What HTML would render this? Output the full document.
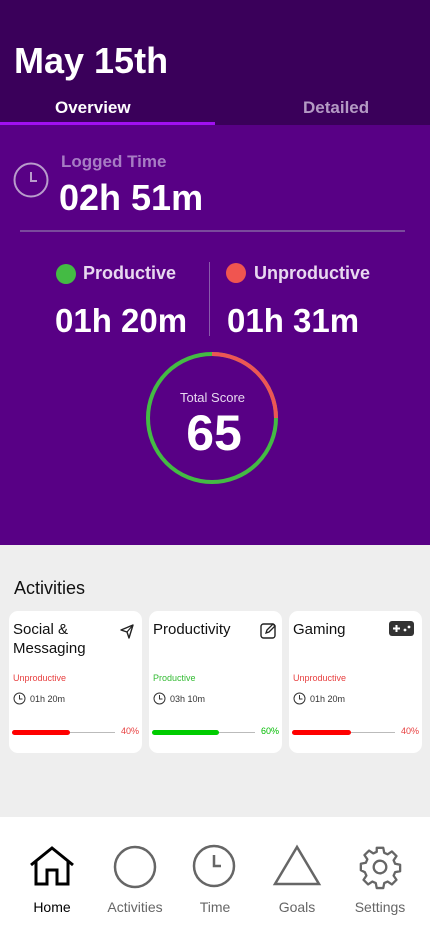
<!DOCTYPE html>
<html><head><style>
*{margin:0;padding:0;box-sizing:border-box}
body{width:430px;height:932px;overflow:hidden;font-family:"Liberation Sans",sans-serif;background:#eee;position:relative}
.a{position:absolute}
.card{position:absolute;top:611px;width:133px;height:142px;background:#fff;border-radius:9px}
.card .t{position:absolute;left:4px;top:9px;font-size:15px;line-height:19px;color:#111}
.card .s{position:absolute;left:4px;top:62px;font-size:9px}
.card .tm{position:absolute;left:4px;top:81px;font-size:9px;color:#333;display:flex;align-items:center;gap:4px}
.card .bar{position:absolute;left:3px;top:121px;width:103px;height:1px;background:#bbb}
.card .fill{position:absolute;left:0;top:-2px;height:5px;border-radius:3px}
.card .p{position:absolute;right:3px;top:115px;font-size:9px}
.nav{position:absolute;top:817px;left:0;width:430px;height:115px;background:#fff}
.nav .l{position:absolute;top:82px;font-size:14px;color:#666;transform:translateX(-50%)}
</style></head><body>
<div class="a" style="left:0;top:0;width:430px;height:125px;background:#3a005a"></div>
<div class="a" style="left:14px;top:40px;font-size:36px;font-weight:bold;color:#fff">May 15th</div>
<div class="a" style="left:55px;top:98px;font-size:17px;font-weight:bold;color:#fff">Overview</div>
<div class="a" style="left:303px;top:98px;font-size:17px;font-weight:bold;color:#b49ac4">Detailed</div>
<div class="a" style="left:0;top:122px;width:215px;height:4px;background:#a010f0"></div>
<div class="a" style="left:0;top:125px;width:430px;height:420px;background:#580085"></div>
<svg class="a" style="left:12px;top:161px" width="38" height="38"><circle cx="19" cy="19" r="16.5" fill="none" stroke="#b99ccc" stroke-width="2"/><path d="M19 11v9h6" fill="none" stroke="#b99ccc" stroke-width="2"/></svg>
<div class="a" style="left:61px;top:152px;font-size:17px;font-weight:bold;color:#a77cc4">Logged Time</div>
<div class="a" style="left:59px;top:177px;font-size:36px;font-weight:bold;color:#fff">02h 51m</div>
<div class="a" style="left:20px;top:230px;width:385px;height:2px;background:#7a4a9c"></div>
<div class="a" style="left:56px;top:264px;width:20px;height:20px;border-radius:50%;background:#44bb44"></div>
<div class="a" style="left:83px;top:263px;font-size:18px;font-weight:bold;color:#e8d8f0">Productive</div>
<div class="a" style="left:226px;top:263px;width:20px;height:20px;border-radius:50%;background:#f05550"></div>
<div class="a" style="left:254px;top:263px;font-size:18px;font-weight:bold;color:#e8d8f0">Unproductive</div>
<div class="a" style="left:209px;top:262px;width:1px;height:74px;background:#8a5aac"></div>
<div class="a" style="left:55px;top:302px;font-size:33px;font-weight:bold;color:#fff">01h 20m</div>
<div class="a" style="left:227px;top:302px;font-size:33px;font-weight:bold;color:#fff">01h 31m</div>
<svg class="a" style="left:144px;top:350px" width="136" height="136"><circle cx="68" cy="68" r="64" fill="none" stroke="#44bb44" stroke-width="4"/><path d="M68 4A64 64 0 0 1 132 68" fill="none" stroke="#ee5555" stroke-width="4"/></svg>
<div class="a" style="left:0;width:425px;text-align:center;top:390px;font-size:13px;color:#e8d8f0">Total Score</div>
<div class="a" style="left:0;width:428px;text-align:center;top:404px;font-size:50px;font-weight:bold;color:#fff">65</div>
<div class="a" style="left:14px;top:578px;font-size:18px;color:#111">Activities</div>

<div class="card" style="left:9px"><div class="t">Social &amp;<br>Messaging</div>
<svg class="a" style="left:110px;top:12px" width="16" height="16"><path d="M14 2L2 7l6 2 2 6z" fill="none" stroke="#222" stroke-width="1.4" stroke-linejoin="round"/><path d="M8 9l6-7" stroke="#222" stroke-width="1.2"/></svg>
<div class="s" style="color:#e84040">Unproductive</div>
<div class="tm"><svg width="13" height="13"><circle cx="6.5" cy="6.5" r="5.5" fill="none" stroke="#333"/><path d="M6.5 3v4h3" fill="none" stroke="#333"/></svg>01h 20m</div>
<div class="bar"><div class="fill" style="width:58px;background:#ff0000"></div></div><div class="p" style="color:#e84040">40%</div></div>

<div class="card" style="left:149px"><div class="t">Productivity</div>
<svg class="a" style="left:111px;top:11px" width="17" height="17"><rect x="1" y="2" width="14" height="14" rx="2.5" fill="none" stroke="#222" stroke-width="1.4"/><path d="M6 11l1-3 6-6 2 2-6 6z" fill="#fff" stroke="#222" stroke-width="1.3"/></svg>
<div class="s" style="color:#33bb33">Productive</div>
<div class="tm"><svg width="13" height="13"><circle cx="6.5" cy="6.5" r="5.5" fill="none" stroke="#333"/><path d="M6.5 3v4h3" fill="none" stroke="#333"/></svg>03h 10m</div>
<div class="bar"><div class="fill" style="width:67px;background:#00cc00"></div></div><div class="p" style="color:#00bb00">60%</div></div>

<div class="card" style="left:289px"><div class="t">Gaming</div>
<svg class="a" style="left:100px;top:10px" width="25" height="16"><rect x="0" y="0" width="25" height="15" rx="3" fill="#333"/><path d="M4 7.5h7M7.5 4v7" stroke="#fff" stroke-width="2"/><circle cx="16" cy="9" r="1.4" fill="#fff"/><circle cx="20" cy="6" r="1.4" fill="#fff"/></svg>
<div class="s" style="color:#e84040">Unproductive</div>
<div class="tm"><svg width="13" height="13"><circle cx="6.5" cy="6.5" r="5.5" fill="none" stroke="#333"/><path d="M6.5 3v4h3" fill="none" stroke="#333"/></svg>01h 20m</div>
<div class="bar"><div class="fill" style="width:59px;background:#ff0000"></div></div><div class="p" style="color:#e84040">40%</div></div>

<div class="nav">
<svg class="a" style="left:28px;top:28px" width="48" height="42"><path d="M3 20L24 3l21 17M8 16v23h11V25h10v14h11V16" fill="none" stroke="#000" stroke-width="3" stroke-linejoin="miter"/></svg>
<svg class="a" style="left:112px;top:27px" width="46" height="46"><circle cx="23" cy="23" r="20" fill="none" stroke="#666" stroke-width="2.5"/></svg>
<svg class="a" style="left:192px;top:27px" width="46" height="46"><circle cx="22" cy="22" r="20" fill="none" stroke="#666" stroke-width="2.5"/><path d="M22 11v11h7" fill="none" stroke="#666" stroke-width="2.5"/></svg>
<svg class="a" style="left:272px;top:27px" width="50" height="44"><path d="M25 3L3 40h44z" fill="none" stroke="#666" stroke-width="2.5" stroke-linejoin="miter"/></svg>
<svg class="a" style="left:357px;top:27px" width="46" height="46" viewBox="0 0 24 24"><path d="M10.3 2h3.4l.5 2.6 1.8.8 2.2-1.5 2.4 2.4-1.5 2.2.8 1.8 2.6.5v3.4l-2.6.5-.8 1.8 1.5 2.2-2.4 2.4-2.2-1.5-1.8.8-.5 2.6h-3.4l-.5-2.6-1.8-.8-2.2 1.5-2.4-2.4 1.5-2.2-.8-1.8L2 13.7v-3.4l2.6-.5.8-1.8-1.5-2.2 2.4-2.4 2.2 1.5 1.8-.8z" fill="none" stroke="#666" stroke-width="1.2" stroke-linejoin="round"/><circle cx="12" cy="12" r="3.3" fill="none" stroke="#666" stroke-width="1.2"/></svg>
<div class="l" style="left:52px;color:#000">Home</div>
<div class="l" style="left:135px">Activities</div>
<div class="l" style="left:215px">Time</div>
<div class="l" style="left:297px">Goals</div>
<div class="l" style="left:380px">Settings</div>
</div>
</body></html>
